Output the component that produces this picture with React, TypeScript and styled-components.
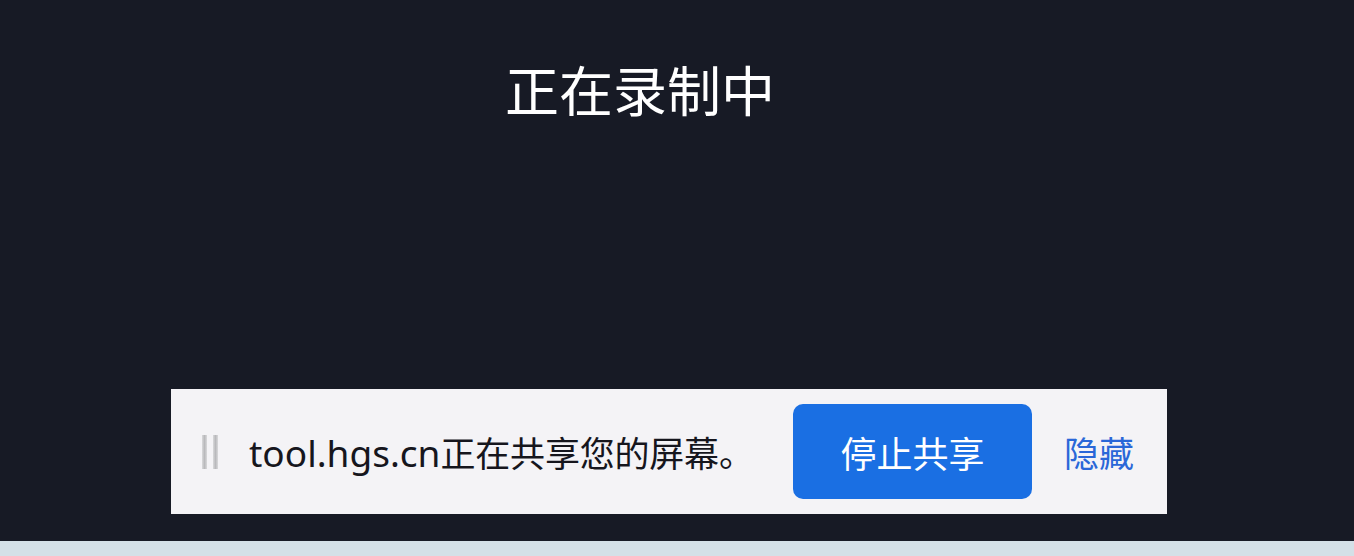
import React from "react";
import styled, { createGlobalStyle } from "styled-components";

const GlobalStyle = createGlobalStyle`
  html, body {
    margin: 0;
    padding: 0;
    background: #171a25;
  }
  body {
    font-family: "Noto Sans", "Noto Sans CJK SC", sans-serif;
  }
`;

const Page = styled.div`
  width: 1354px;
  height: 556px;
  display: flex;
  flex-direction: column;
  background: #171a25;
  overflow: hidden;
`;

const Stage = styled.main`
  flex: 1;
  display: flex;
  flex-direction: column;
  padding: 0 0 0 171px;
`;

const Header = styled.header`
  width: 996px;
  height: 389px;
  display: flex;
  justify-content: center;
  padding-right: 58px;
  box-sizing: border-box;
`;

const Title = styled.h1`
  margin: 58px 0 0;
  font-family: "Noto Sans CJK SC", sans-serif;
  font-weight: 400;
  font-size: 54px;
  line-height: 62px;
  color: #ffffff;
  letter-spacing: 0;
`;

const ShareBar = styled.section`
  width: 996px;
  height: 125px;
  box-sizing: border-box;
  background: #f4f3f6;
  display: flex;
  align-items: center;
  padding: 0 33px 0 31px;
`;

const Grip = styled.div`
  display: flex;
  gap: 6px;
  height: 34px;
  margin-right: 31px;
`;

const GripLine = styled.span`
  width: 5px;
  height: 100%;
  background: linear-gradient(90deg, #d9d9db 0%, #b9b9bc 50%, #d9d9db 100%);
`;

const Message = styled.p`
  margin: 0;
  flex: 1;
  font-family: "Noto Sans CJK SC", sans-serif;
  font-size: 35px;
  color: #16161d;
  white-space: nowrap;
  letter-spacing: -0.2px;
`;

const Host = styled.span`
  font-family: "Noto Sans", sans-serif;
  font-size: 37px;
  letter-spacing: 0;
`;

const StopButton = styled.button`
  width: 239px;
  height: 95px;
  border: none;
  border-radius: 10px;
  background: #1a6fe3;
  color: #ffffff;
  font-family: "Noto Sans CJK SC", sans-serif;
  font-size: 36px;
  padding: 0;
  margin-right: 32px;
  cursor: pointer;
`;

const HideLink = styled.button`
  border: none;
  background: none;
  padding: 0;
  color: #2a67d8;
  font-family: "Noto Sans CJK SC", sans-serif;
  font-size: 35px;
  cursor: pointer;
`;

const Strip = styled.footer`
  height: 15px;
  background: #d4e0e7;
`;

export default function App() {
  return (
    <>
      <GlobalStyle />
      <Page>
        <Stage>
          <Header>
            <Title>正在录制中</Title>
          </Header>
          <ShareBar>
            <Grip>
              <GripLine />
              <GripLine />
            </Grip>
            <Message>
              <Host>tool.hgs.cn</Host>正在共享您的屏幕。
            </Message>
            <StopButton>停止共享</StopButton>
            <HideLink>隐藏</HideLink>
          </ShareBar>
        </Stage>
        <Strip />
      </Page>
    </>
  );
}
